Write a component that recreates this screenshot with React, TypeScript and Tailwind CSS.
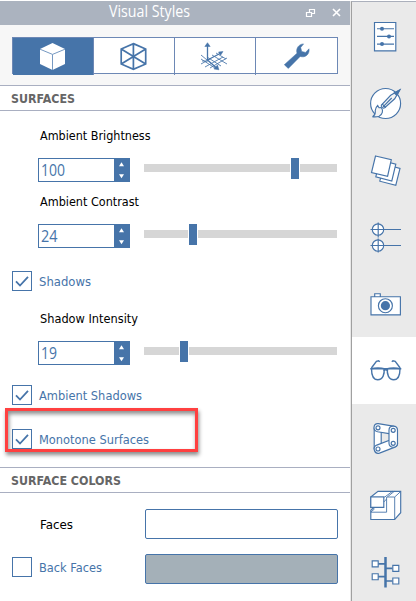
import React from "react";

const BLUE = "#4674a9";

function Label({ text, width, className = "" }: { text: string; width: number; className?: string }) {
  return (
    <svg width={width + 4} height={20} className={`block shrink-0 overflow-visible ${className}`}>
      <text x={0} y={14.5} textLength={width} lengthAdjust="spacingAndGlyphs" fill="currentColor">
        {text}
      </text>
    </svg>
  );
}

function Spinner({ value, width }: { value: string; width: number }) {
  return (
    <div className="flex h-6 w-[92px] shrink-0 border border-[#4674a9] bg-white">
      <div className="flex h-[22px] w-[75px] items-center pl-[2px] text-[15.5px] text-[#4674a9] [font-family:'Open_Sans','Noto_Sans',sans-serif]">
        <Label text={value} width={width} className="relative top-[1px]" />
      </div>
      <svg width="15" height="22" viewBox="0 0 15 22" className="bg-[#4674a9]" fill="#fff">
        <path d="M5 7.2 7.5 3.3 10 7.2ZM5 15.3h5L7.5 19.2Z" />
      </svg>
    </div>
  );
}

function Control({ label, labelWidth, value, valueWidth, handle }: {
  label: string; labelWidth: number; value: string; valueWidth: number; handle: string;
}) {
  return (
    <div className="flex h-[66px] flex-col">
      <div className="flex h-[34px] items-start pl-10 pt-[1px] text-black">
        <Label text={label} width={labelWidth} />
      </div>
      <div className="flex pl-[38px]">
        <Spinner value={value} width={valueWidth} />
        <div className="ml-[14px] mt-[6px] h-2 w-[193px] bg-[#d6d6d6]">
          <div className={`relative -top-[6px] h-[21px] w-[10px] border-x border-white bg-[#4674a9] ${handle}`} />
        </div>
      </div>
    </div>
  );
}

function Check({ label, width, checked = true }: { label: string; width: number; checked?: boolean }) {
  return (
    <div className="flex h-5 items-center pl-3 text-[#4674a9]">
      <div className="h-5 w-5 border border-[#4674a9] bg-white">
        {checked && (
          <svg width="18" height="18" viewBox="0 0 18 18" fill="none" stroke={BLUE} strokeWidth="1.8">
            <path d="m3 9.3 4 4.2 8-8.7" />
          </svg>
        )}
      </div>
      <Label text={label} width={width} className="ml-[7px]" />
    </div>
  );
}

function Section({ title, width }: { title: string; width: number }) {
  return (
    <div className="flex h-[26px] items-center border-y border-[#a9afc1] bg-white pl-[11px] font-bold text-[#666]">
      <Label text={title} width={width} />
    </div>
  );
}

const tools = [
  {
    box: "13 37 81 37",
    art: (
      <g stroke="none">
        <path d="M52.5 42 65 48v15l-12.5 6L40 63V48Z" fill="#fff" />
        <path d="M40 48.2 52.5 53.4 65 48.2M52.5 53.4V69" fill="none" stroke="#7699c2" strokeWidth="1" />
      </g>
    ),
  },
  {
    box: "94 37 81 37",
    art: <path d="M133.4 42.6 145.7 48v15l-12.3 5.4L121.2 63V48ZM133.4 42.6v25.8M121.2 48l24.5 15M145.7 48l-24.5 15" strokeWidth="1.7" />,
  },
  {
    box: "175 37 81 37",
    art: (
      <g>
        <path d="M207.5 59V43M207.5 59 221 52M207.5 59l9 8" strokeWidth="1.3" />
        <path d="m204.8 45.5 2.7-3.8 2.7 3.8ZM218.5 51l4.5-.5-2.4 3.7ZM217.5 64l1.4 4.8-5-.9Z" fill={BLUE} strokeWidth=".5" />
        <path d="m201 58 14 9M207 56l14 9M212 54l15 9M216 52l10 6M201 63l9-5M205 66l18-10M210 67l17-10M201 54l6 5M202 60h6" strokeWidth=".85" />
      </g>
    ),
  },
  {
    box: "256 37 81 37",
    art: (
      <path
        d="M284.3 63.7 297 52.2c-1.5-5 2.2-9.4 6.6-9.3l-2.9 3.7 1 3.8 3.8 1 3.5-3.6c1 5.2-3.7 9.5-8.8 7.6L288.3 67.5Z"
        fill={BLUE}
        strokeWidth=".5"
      />
    ),
  },
];

const icons = [
  <g key="sliders">
    <path d="M374.5 22.5h21.3v28.3h-21.3Z" fill="#fff" />
    <path d="M377 28.7h17M377 36.4h17M377 44.1h17" />
    <g fill={BLUE} stroke="none"><circle cx="382" cy="28.7" r="2" /><circle cx="389" cy="36.4" r="2" /><circle cx="382" cy="44.1" r="2" /></g>
  </g>,
  <g key="brush">
    <circle cx="385.6" cy="103.5" r="15" fill="#fff" />
    <path d="m399.7 90-9 5.3-9.3 9.7c-.7 1.7 1.3 3.8 3.3 2.8l10-9Z" fill="#f4f4f4" />
    <path d="m399.7 90-5.4 2.9 2.5 2.5Z" fill={BLUE} />
    <path d="M383 106.8 391.7 98M382 103.8l3.8 3.7M377.7 105.5l1.3 2.2 2.2-.2c2.5 3 1.2 7-2.1 8.8-2.3.8-4.2.5-6.6.5 3.5-1.6 2.7-3.4 2.8-6.5.1-2 1.1-3.6 2.4-4.8Z" fill="#f4f4f4" />
  </g>,
  <g key="layers" fill="#fff">
    <path d="m384.2 164.2 15.8 4.3-4.2 16.7-16-4Z" />
    <path d="m380 160 15.8 4.2-4 16.8-16-4.2Z" />
    <path d="m375.5 156 15.8 3.6-3.7 16.6-16.1-3.7Z" />
  </g>,
  <g key="targets">
    <circle cx="378" cy="229.5" r="5.7" fill="#fff" /><circle cx="378" cy="245.5" r="5.7" fill="#fff" />
    <path d="M370.5 229.5h30.5M370.5 245.5h30.5M378.2 222.5v15M378.2 238.5v14" />
  </g>,
  <g key="camera">
    <path d="M371 296.7h29.4v18.1H371ZM374.7 296.7v-3h5.6v3" fill="#fff" />
    <circle cx="385.4" cy="305.7" r="7" fill="#fff" /><circle cx="385.4" cy="305.7" r="4.6" fill={BLUE} stroke="none" />
  </g>,
  <g key="glasses">
    <path d="M371.5 368.7c3-.9 10-.9 12.5 0 .8 5-1 11-6.3 11-4.2 0-6.2-3.7-6.2-11ZM387.5 368.7c2.5-.9 9.5-.9 12.5 0 0 7.3-2 11-6.2 11-5.3 0-7.1-6-6.3-11Z" fill="#fff" strokeWidth="1.4" />
    <path d="M370.3 368.7h31M371.4 368l5-6.7 2.2-.5 1.2 1M400.2 368l-5-6.7-2.2-.5-1.2 1M384 371c.4-1.7 3-1.7 3.5 0" strokeWidth="1.4" />
  </g>,
  <g key="linkage" fill="#fff">
    <path d="M374.2 428v21h7v-21Z" />
    <path d="m378.2 423.6 15 2.5c5.1 1 4.4 8.7-1.2 8l-14.4-2.4c-5.3-1.2-4.4-8.4.6-8.1Z" />
    <path d="m392 439.2-15.2 5.9c-4.8 2.2-2.4 9.4 2.7 8l15.4-6c5-2.5 2.2-9.5-2.9-7.9Z" />
    <path d="M389 430.2c0-5.4 8.4-5.4 8.5 0v13c0 5.3-8.5 5.4-8.5 0Z" />
    <circle cx="378" cy="427.8" r="2" /><circle cx="393.2" cy="430.3" r="2" />
    <circle cx="393.2" cy="443.3" r="2" /><circle cx="378" cy="449" r="2" />
  </g>,
  <g key="block" fill="#fff">
    <path d="M370.8 497 378 491.4h22.7v21.3l-6 6.8h-23.9v-9.2l3-2.5-3-.4Z" />
    <path d="M370.8 497h14l7.6-5.6M387.2 497l7-5.6M387.2 497h7.5l6-5.5M394.7 497v22.5" fill="none" strokeWidth=".9" />
    <path d="M370.8 497h13v10.4h-13Z" />
    <path d="M386.6 497v15.2h-15.8M374.5 509l-3.7 3M386.6 499l-2.8 3" fill="none" strokeWidth=".9" />
  </g>,
  <g key="tree">
    <path d="M385.5 557v30.5" strokeWidth="2.5" />
    <path d="M378 563.9h7.5M378 576.7h7.5M385.5 568.4h7M385.5 581h7" strokeWidth="1.7" />
    <path d="M372.2 560.8h6v6h-6ZM372.2 573.7h6v6h-6ZM392.8 565.4h6v6h-6ZM392.8 578h6v6h-6Z" fill="#fff" />
  </g>,
];

export default function App() {
  return (
    <div className="flex h-[601px] w-[416px] flex-col overflow-hidden bg-white text-[13px] [font-family:'DejaVu_Sans_Condensed','DejaVu_Sans',sans-serif]">
      <div className="flex h-[601px] pt-px">
        <main className="relative flex w-[350px] shrink-0 flex-col">
          <header className="flex h-6 items-center bg-[#abb3bf] pl-[109px] text-white">
            <div className="text-[15.5px] [font-family:'Open_Sans','Noto_Sans',sans-serif]">
              <Label text="Visual Styles" width={81} className="relative top-[-1px]" />
            </div>
            <svg width="40" height="14" viewBox="0 0 40 14" className="ml-[111px]" fill="none" stroke="#fff">
              <path d="M4.5 6V3.5h5v4H7M1.5 6.5h5v4h-5ZM4 3.5h6M1 6.5h6" strokeWidth="1.2" />
              <path d="m28 3 7 7M35 3l-7 7" strokeWidth="1.6" />
            </svg>
          </header>
          <div className="h-[60px] bg-[#f7f7f7] pl-3 pt-3">
            <div className="grid h-[37px] w-[326px] grid-cols-4 border border-[#6d88b5] bg-white">
              {tools.map(({ box, art }, i) => (
                <button key={box} className={`flex items-center ${i === 3 ? "" : "border-r border-[#6d88b5]"} ${i === 0 ? "bg-[#4674a9]" : ""}`}>
                  <svg viewBox={box} width="81" height="37" className="shrink-0" fill="none" stroke={BLUE}>{art}</svg>
                </button>
              ))}
            </div>
          </div>
          <Section title="SURFACES" width={64} />
          <div className="flex h-[356px] flex-col pt-[13px]">
            <Control label="Ambient Brightness" labelWidth={110.5} value="100" valueWidth={24} handle="left-[146px]" />
            <Control label="Ambient Contrast" labelWidth={99} value="24" valueWidth={16.5} handle="left-[44px]" />
            <div className="mt-[15px]"><Check label="Shadows" width={52} /></div>
            <div className="mt-4"><Control label="Shadow Intensity" labelWidth={98} value="19" valueWidth={16} handle="left-[35px]" /></div>
            <div className="mt-3"><Check label="Ambient Shadows" width={103} /></div>
            <div className="mt-6"><Check label="Monotone Surfaces" width={110} /></div>
          </div>
          <Section title="SURFACE COLORS" width={110} />
          <div className="flex h-[61px] items-start pt-4">
            <div className="w-[145px] pl-10 pt-[5px] text-black"><Label text="Faces" width={33} /></div>
            <div className="h-[30px] w-[193px] rounded-[2px] border border-[#4674a9] bg-white" />
          </div>
          <div className="flex h-[45px] items-start">
            <div className="w-[145px] pt-[3px]"><Check label="Back Faces" width={63} checked={false} /></div>
            <div className="h-[30px] w-[193px] rounded-[2px] border border-[#4674a9] bg-[#a4b0b8]" />
          </div>
          <div className="absolute left-[5px] top-[407px] h-[44px] w-[193px] border-[3px] border-[#ff4040] shadow-[1px_3px_4px_rgba(0,0,0,0.45),inset_1px_3px_4px_rgba(0,0,0,0.45)]" />
        </main>
        <div className="w-px shrink-0 bg-[#e8e8e8]" />
        <nav className="flex w-[65px] shrink-0 flex-col border-l border-t border-[#a0a0a0] border-t-[#abb0bc] bg-[#eaeaea]">
          {icons.map((icon, i) => (
            <button key={icon.key} className={`block h-[67px] w-16 shrink-0 ${i === 5 ? "bg-white" : ""}`}>
              <svg width="64" height="67" viewBox={`352 ${2 + i * 67} 64 67`} fill="none" stroke={BLUE} strokeWidth="1.15">{icon}</svg>
            </button>
          ))}
        </nav>
      </div>
    </div>
  );
}
